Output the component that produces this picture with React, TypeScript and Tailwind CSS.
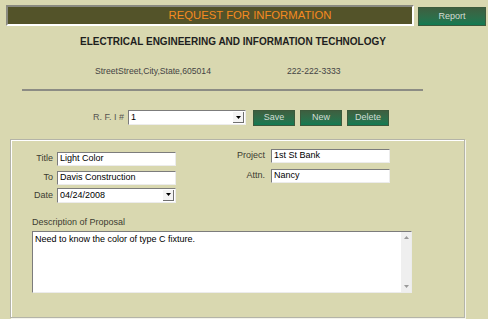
import React from "react";

const inset =
  "border border-t-[#7c7c7c] border-l-[#7c7c7c] border-b-[#ececec] border-r-[#ececec] bg-white";

function Field({ value, width = "w-[119px]" }: { value: string; width?: string }) {
  return (
    <div className={`${inset} ${width} flex h-[14px] items-center px-[2px] text-[9px] leading-none text-black`}>
      {value}
    </div>
  );
}

function SelectBox({ value, width }: { value: string; width: string }) {
  return (
    <div className={`${inset} ${width} flex h-[15px] items-center justify-between pl-[2px] text-[9px] leading-none text-black`}>
      <span>{value}</span>
      <div className="mr-[1px] flex h-[11px] w-[11px] items-center justify-center border-b border-r border-b-[#707070] border-r-[#707070] bg-[#f4f4f4]">
        <svg width="5" height="3" viewBox="0 0 5 3">
          <path d="M0 0h5L2.5 3z" fill="#000" />
        </svg>
      </div>
    </div>
  );
}

function GreenButton({ label, className = "" }: { label: string; className?: string }) {
  return (
    <div
      className={`flex items-center justify-center border border-[#3c5a3c] bg-gradient-to-b from-[#3d5f40] to-[#0f7a52] text-[9px] leading-none text-[#d4dcd4] ${className}`}
    >
      {label}
    </div>
  );
}

export default function App() {
  return (
    <div className="h-[319px] w-[488px] overflow-hidden bg-[#d9d8b0] font-['Liberation_Sans',Arial,sans-serif]">
      <div className="flex items-start pt-[5px]">
        <div className="ml-[6px] flex h-[21px] w-[408px] items-center justify-center border-2 border-t-[#8a8a80] border-l-[#8a8a80] border-b-white border-r-white bg-[#535329] pl-[80px] text-[11.3px] leading-none text-[#f58a20]">
          REQUEST FOR INFORMATION
        </div>
        <GreenButton label="Report" className="ml-[4px] mt-[2px] h-[19px] w-[68px] text-[9.5px]" />
      </div>

      <div className="mt-[11px] w-[466px] text-center text-[10px] font-bold leading-none text-[#1e1e1e]">
        ELECTRICAL ENGINEERING AND INFORMATION TECHNOLOGY
      </div>

      <div className="mt-[20px] flex text-[8.6px] leading-none text-[#444444]">
        <span className="ml-[95px] w-[192px]">StreetStreet,City,State,605014</span>
        <span>222-222-3333</span>
      </div>

      <div className="ml-[22px] mt-[13px] h-[2px] w-[401px] bg-[#8c8c84]" />

      <div className="mt-[19px] flex items-center">
        <span className="ml-[93px] w-[35px] text-[9px] leading-none text-[#555550]">R. F. I #</span>
        <SelectBox value="1" width="w-[118px]" />
        <GreenButton label="Save" className="ml-[7px] h-[16px] w-[42px]" />
        <GreenButton label="New" className="ml-[5px] h-[16px] w-[42px]" />
        <GreenButton label="Delete" className="ml-[5px] h-[16px] w-[42px]" />
      </div>

      <div className="ml-[10px] mt-[13px] h-[179px] w-[455px] border border-[#b4b4a8] shadow-[inset_1px_1px_0_#ffffff,1px_1px_0_#f4f4ec]">
        <div className="flex text-[9px] leading-none text-[#3c3c30]">
          <div className="mt-[12px] flex flex-col">
            <div className="flex items-center">
              <span className="w-[42px] text-right">Title</span>
              <div className="ml-[4px]"><Field value="Light Color" /></div>
            </div>
            <div className="mt-[5px] flex items-center">
              <span className="w-[42px] text-right">To</span>
              <div className="ml-[4px]"><Field value="Davis Construction" /></div>
            </div>
            <div className="mt-[3px] flex items-center">
              <span className="w-[42px] text-right">Date</span>
              <div className="ml-[4px]"><SelectBox value="04/24/2008" width="w-[119px]" /></div>
            </div>
          </div>
          <div className="ml-[42px] mt-[9px] flex flex-col">
            <div className="flex items-center">
              <span className="w-[47px] text-right">Project</span>
              <div className="ml-[6px]"><Field value="1st St Bank" /></div>
            </div>
            <div className="mt-[6px] flex items-center">
              <span className="w-[47px] text-right">Attn.</span>
              <div className="ml-[6px]"><Field value="Nancy" /></div>
            </div>
          </div>
        </div>

        <div className="ml-[21px] mt-[15px] text-[9px] leading-none text-[#3c3c30]">Description of Proposal</div>

        <div className={`${inset} ml-[21px] mt-[4px] flex h-[62px] w-[380px]`}>
          <div className="flex-1 px-[2px] pt-[3px] text-[9px] leading-none text-black">
            Need to know the color of type C fixture.
          </div>
          <div className="flex w-[10px] flex-col items-center justify-between bg-[#efefef] py-[4px]">
            <svg width="5" height="3" viewBox="0 0 5 3">
              <path d="M0 3h5L2.5 0z" fill="#9a9a9a" />
            </svg>
            <svg width="5" height="3" viewBox="0 0 5 3">
              <path d="M0 0h5L2.5 3z" fill="#9a9a9a" />
            </svg>
          </div>
        </div>
      </div>
    </div>
  );
}
